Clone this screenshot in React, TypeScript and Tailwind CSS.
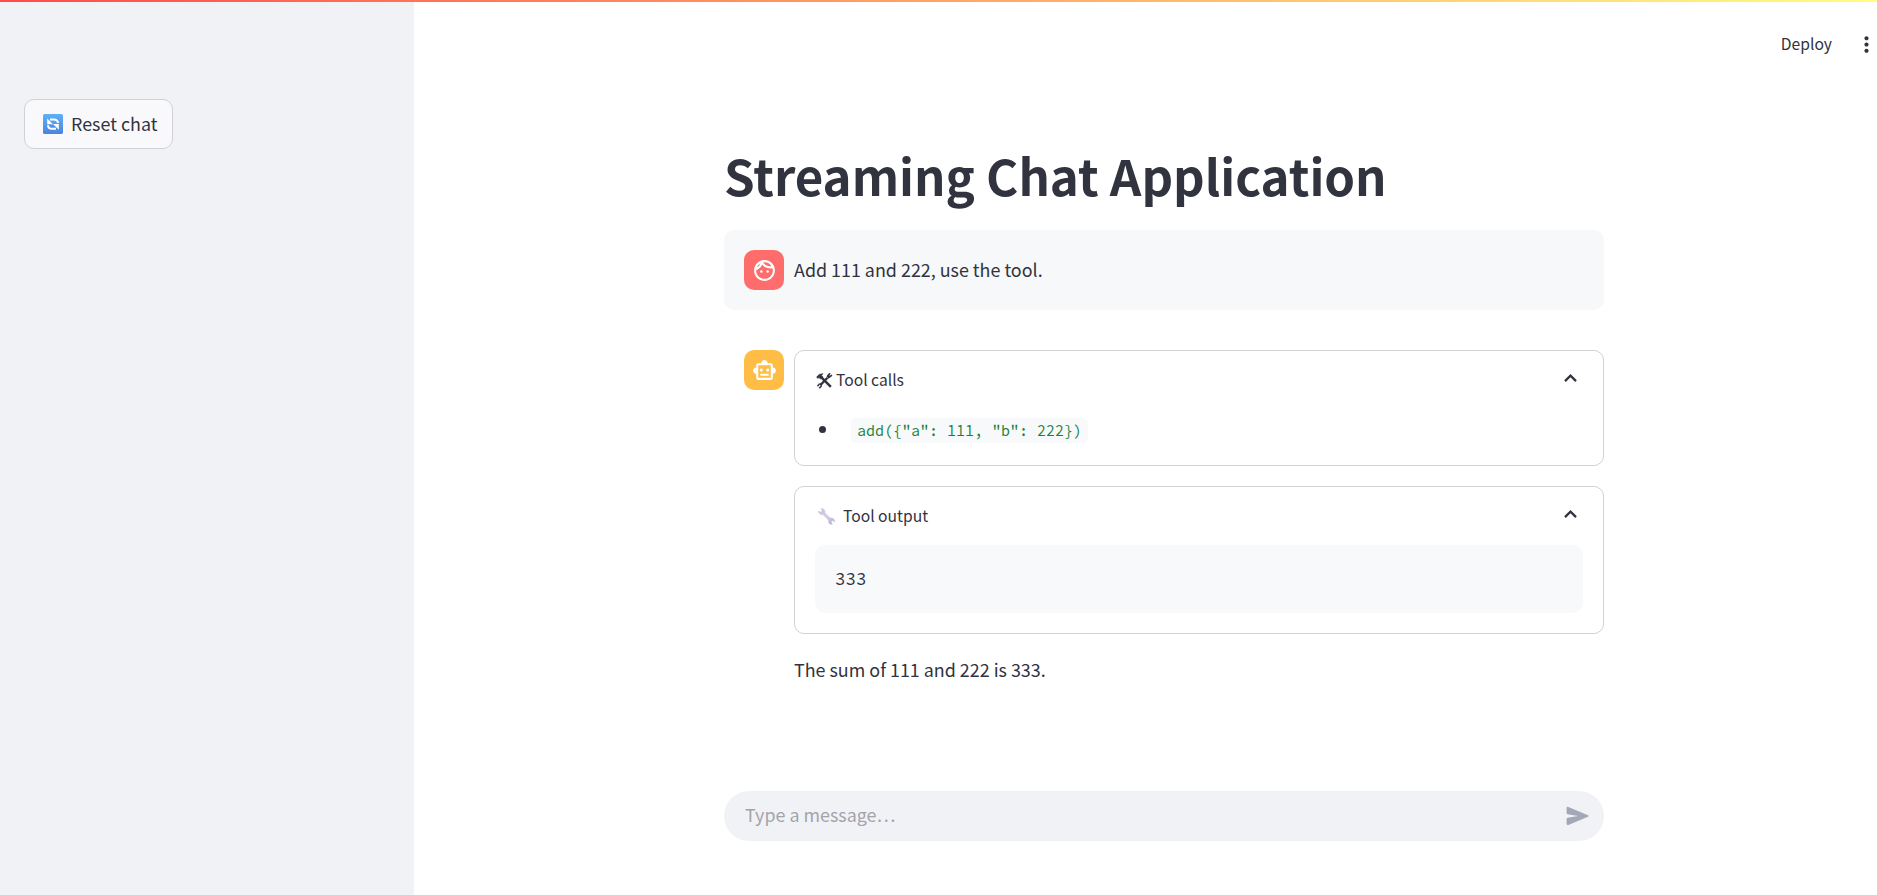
import type { ReactNode } from "react";
import { MdMoreVert, MdOutlineFace, MdOutlineSmartToy } from "react-icons/md";

function ResetIcon() {
  return (
    <svg viewBox="0 0 20 20" className="size-5 shrink-0">
      <defs>
        <linearGradient id="reset-bg" x1="0" y1="0" x2="0" y2="1">
          <stop offset="0" stopColor="#5fb1f5" />
          <stop offset="1" stopColor="#4a84de" />
        </linearGradient>
      </defs>
      <rect width="20" height="20" rx="1.6" fill="url(#reset-bg)" />
      <path d="M7 5.400H10.800C13.400 5.400 14.900 6.800 15 9" fill="none" stroke="#fff" strokeWidth="2" />
      <path d="M4.200 4.400v5.800h5.800z" fill="#fff" />
      <path d="M13 14.800H9.200C6.600 14.800 5.100 13.400 5 11.200" fill="none" stroke="#fff" strokeWidth="2" />
      <path d="M15.800 15.800V10h-5.800z" fill="#fff" />
    </svg>
  );
}

function HammerWrenchIcon() {
  return (
    <svg viewBox="0 0 16 16" className="size-[17px] shrink-0" fill="none" stroke="#31333f">
      <path d="M4.600 4.600L14 14" strokeWidth="2.400" />
      <path d="M.6 4.800C2 2.600 3.600 1.600 6.600 1.600L5.200 3 6.400 4.600 4.200 6.600 2.800 5.200 1.600 6z" fill="#31333f" strokeWidth=".5" />
      <path d="M10.800 5.400L4.200 12.200" strokeWidth="2.200" />
      <path d="M13.200 1.200l-1.800 2 1.400 1.400 2.200-1.600" strokeWidth="1.600" />
      <path d="M10.600 3.400l2 2.200" strokeWidth="2" />
      <path d="M4.800 11.200L3 11.400 1.400 13.400M5 11.600l-.2 2-1.800 1.600" strokeWidth="1.400" />
    </svg>
  );
}

function WrenchIcon() {
  return (
    <svg viewBox="0 0 16 16" className="size-[17px] shrink-0">
      <defs>
        <linearGradient id="wrench-metal" x1="0" y1="0" x2="1" y2="1">
          <stop offset="0" stopColor="#c9bfd9" />
          <stop offset=".5" stopColor="#d6cde4" />
          <stop offset="1" stopColor="#b9aecc" />
        </linearGradient>
      </defs>
      <path
        fill="url(#wrench-metal)"
        stroke="url(#wrench-metal)"
        strokeWidth=".5"
        strokeLinejoin="round"
        d="M2.800.6L4.900.8 6.400 2.200 6.500 4.400 11.600 9.400 13.800 9.500 15.300 11.100 15.600 13 13.600 11.800 12.300 12.900 13.400 15.300 11.400 15.200 9.900 13.600 9.800 11.400 4.800 6.300 2.600 6.200.8 4.600.5 2.800 2.600 4 4 2.800z"
      />
    </svg>
  );
}

function Chevron() {
  return (
    <svg viewBox="0 0 24 24" className="mb-[2px] size-6 shrink-0" fill="#31333f">
      <path d="M12.500 8l-6.300 6.300 1.600 1.600 4.700-4.700 4.700 4.700 1.600-1.600z" />
    </svg>
  );
}

function SendIcon() {
  return (
    <svg viewBox="0 0 24 20" className="h-5 w-6 shrink-0" fill="#a3a8b8">
      <path d="M.6 2.200C.6 1.200 1.500.6 2.400 1L22 9.200c.8.300.8 1.300 0 1.600L2.400 19c-.9.400-1.800-.2-1.800-1.200V13c0-.6.400-1.100 1-1.200L12.100 10 1.600 8.200C1 8.100.6 7.600.6 7z" />
    </svg>
  );
}

function Avatar({ children, className }: { children: ReactNode; className: string }) {
  return (
    <div className={`flex size-10 shrink-0 items-center justify-center rounded-[10px] text-white ${className}`}>
      {children}
    </div>
  );
}

function Expander({ icon, title, children }: { icon: ReactNode; title: string; children: ReactNode }) {
  return (
    <section className="rounded-[10px] border border-[#d2d2d5] px-5">
      <header className="flex h-14 items-center justify-between pr-px">
        <div className="flex items-center pt-[2px] text-[15.65px]">
          {icon}
          <span>{title}</span>
        </div>
        <Chevron />
      </header>
      {children}
    </section>
  );
}

export default function App() {
  return (
    <div className="flex h-[895px] flex-col overflow-hidden bg-white font-['Noto_Sans_CJK_SC',sans-serif] text-[17.9px] leading-[30px] text-[#31333f]">
      <div className="h-[2px] shrink-0 bg-linear-to-r/srgb from-[#ff4b4b] to-[#fffd80]" />
      <div className="flex min-h-0 flex-1">
        <aside className="w-[414px] shrink-0 bg-[#f0f2f6] px-6 pt-[97px]">
          <button className="flex h-[50px] w-[149px] items-center gap-2 rounded-[10px] border border-[#d0d1d7] bg-[#f9f9fb] pl-[18px] whitespace-nowrap">
            <ResetIcon />
            <span className="pb-[2px]">Reset chat</span>
          </button>
        </aside>

        <main className="flex min-w-0 flex-1 flex-col">
          <div className="flex h-[86px] shrink-0 items-center justify-end gap-[22px] pb-[2px] text-[15.65px]">
            <span>Deploy</span>
            <MdMoreVert className="-mr-[2px] size-[25px]" />
          </div>

          <div className="ml-[310px] flex w-[880px] flex-1 flex-col pt-[54px]">
            <h1 className="mb-[22px] text-[49.2px] leading-[66px] font-bold whitespace-nowrap">
              Streaming Chat Application
            </h1>

            <div className="flex h-20 items-center gap-[10px] rounded-[10px] bg-[#f7f8fa] px-5">
              <Avatar className="bg-[#ff6c6c]">
                <MdOutlineFace className="size-[25px]" />
              </Avatar>
              <p className="pb-[2px]">Add 111 and 222, use the tool.</p>
            </div>

            <div className="mt-10 flex gap-[10px] pl-5">
              <Avatar className="bg-[#ffbd45]">
                <MdOutlineSmartToy className="size-[25px]" />
              </Avatar>
              <div className="flex flex-1 flex-col gap-5">
                <Expander icon={<span className="mr-[3px] ml-px"><HammerWrenchIcon /></span>} title="Tool calls">
                  <ul className="flex h-[58px] items-start pt-[11px]">
                    <li className="flex items-center">
                      <span className="mr-[25px] mb-[2px] ml-1 size-[7px] rounded-full bg-[#31333f]" />
                      <code className="flex h-[25px] items-center rounded-[5px] bg-[#f8f9fb] px-[6px] font-['Source_Code_Pro','Noto_Sans_Mono_CJK_SC',monospace] text-[15px] text-[#158237]">
                        {'add({"a": 111, "b": 222})'}
                      </code>
                    </li>
                  </ul>
                </Expander>
                <Expander icon={<span className="mr-2 ml-[3px]"><WrenchIcon /></span>} title="Tool output">
                  <pre className="mt-[2px] mb-5 flex h-[68px] items-center rounded-[10px] bg-[#f8f9fb] px-5 font-['Source_Code_Pro','Noto_Sans_Mono_CJK_SC',monospace] text-[17.5px]">
                    333
                  </pre>
                </Expander>
                <p>The sum of 111 and 222 is 333.</p>
              </div>
            </div>

            <div className="mt-auto mb-[54px] flex h-[50px] items-center justify-between rounded-full bg-[#f0f2f6] pr-[14px] pl-[21px]">
              <span className="pb-1 text-[#a3a4a9]">Type a message…</span>
              <SendIcon />
            </div>
          </div>
        </main>
      </div>
    </div>
  );
}
